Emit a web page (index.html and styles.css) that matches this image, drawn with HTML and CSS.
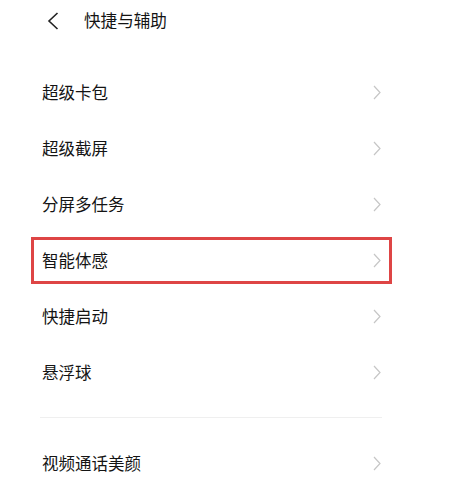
FILE: index.html
```html
<!DOCTYPE html>
<html lang="zh-CN">
<head>
<meta charset="utf-8">
<link rel="stylesheet" href="styles.css">
</head>
<body>
<header class="topbar">
  <span class="back">
    <svg width="12" height="18" viewBox="0 0 12 18"><path d="M10.5 1 L2 9 L10.5 17" fill="none" stroke="#222" stroke-width="1.6" stroke-linejoin="miter"/></svg>
  </span>
  <h1 class="title">快捷与辅助</h1>
</header>
<main class="list">
  <div class="row"><span class="label">超级卡包</span><svg class="chev" width="8" height="15" viewBox="0 0 8 15"><path d="M1 1 L7 7.5 L1 14" fill="none" stroke="#c6c6c6" stroke-width="1.2"/></svg></div>
  <div class="row"><span class="label">超级截屏</span><svg class="chev" width="8" height="15" viewBox="0 0 8 15"><path d="M1 1 L7 7.5 L1 14" fill="none" stroke="#c6c6c6" stroke-width="1.2"/></svg></div>
  <div class="row"><span class="label">分屏多任务</span><svg class="chev" width="8" height="15" viewBox="0 0 8 15"><path d="M1 1 L7 7.5 L1 14" fill="none" stroke="#c6c6c6" stroke-width="1.2"/></svg></div>
  <div class="row highlighted"><span class="label">智能体感</span><svg class="chev" width="8" height="15" viewBox="0 0 8 15"><path d="M1 1 L7 7.5 L1 14" fill="none" stroke="#c6c6c6" stroke-width="1.2"/></svg></div>
  <div class="row"><span class="label">快捷启动</span><svg class="chev" width="8" height="15" viewBox="0 0 8 15"><path d="M1 1 L7 7.5 L1 14" fill="none" stroke="#c6c6c6" stroke-width="1.2"/></svg></div>
  <div class="row"><span class="label">悬浮球</span><svg class="chev" width="8" height="15" viewBox="0 0 8 15"><path d="M1 1 L7 7.5 L1 14" fill="none" stroke="#c6c6c6" stroke-width="1.2"/></svg></div>
  <div class="divider"></div>
  <div class="row"><span class="label">视频通话美颜</span><svg class="chev" width="8" height="15" viewBox="0 0 8 15"><path d="M1 1 L7 7.5 L1 14" fill="none" stroke="#c6c6c6" stroke-width="1.2"/></svg></div>
</main>
</body>
</html>
```
FILE: styles.css
```css
html, body {
  margin: 0;
  padding: 0;
  background: #ffffff;
}
body {
  width: 452px;
  height: 491px;
  overflow: hidden;
  font-family: "Noto Sans CJK SC", "Noto Sans", sans-serif;
  color: #141414;
}
.topbar {
  height: 40px;
  display: flex;
  align-items: center;
  padding-left: 47px;
}
.back {
  display: flex;
  width: 12px;
  height: 18px;
  margin-top: 2px;
}
.title {
  margin: 0 0 0 25px;
  font-size: 16.6px;
  font-weight: 400;
  line-height: 20px;
  color: #141414;
}
.list {
  padding-top: 24px;
  margin-left: 42px;
  width: 339px;
}
.row {
  position: relative;
  height: 56px;
  display: flex;
  align-items: center;
  justify-content: space-between;
}
.label {
  font-size: 16.5px;
  line-height: 20px;
}
.chev {
  display: block;
}
.highlighted::after {
  content: "";
  position: absolute;
  left: -11px;
  right: -11px;
  top: 5px;
  bottom: 4px;
  border: 3px solid #de4545;
  box-sizing: border-box;
}
.divider {
  height: 1px;
  background: #efefef;
  margin: 17px -1px 17px -2px;
}
```
